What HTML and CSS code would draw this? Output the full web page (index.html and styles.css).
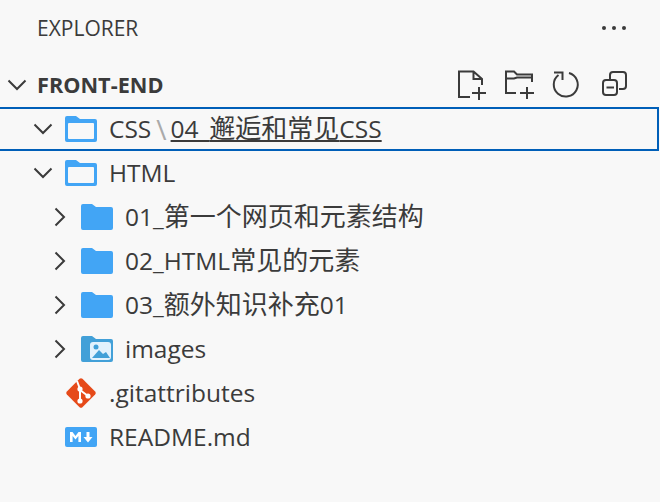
FILE: index.html
```html
<!DOCTYPE html>
<html lang="en">
<head>
  <meta charset="UTF-8" />
  <title>Explorer</title>
  <link rel="stylesheet" href="styles.css">
</head>
<body>

<svg class="sprites" width="0" height="0">
  <symbol id="chev-down" viewBox="0 0 20 12"><path d="M1.5 1.5 L10 10 L18.5 1.5" fill="none" stroke="#3b3b3b" stroke-width="2"/></symbol>
  <symbol id="chev-right" viewBox="0 0 12 20"><path d="M1.5 1.5 L10 10 L1.5 18.5" fill="none" stroke="#3b3b3b" stroke-width="2"/></symbol>
  <symbol id="folder-open" viewBox="0 0 32 26"><path d="M2 0h9l4 3h15a2 2 0 0 1 2 2v19a2 2 0 0 1-2 2H2a2 2 0 0 1-2-2V2a2 2 0 0 1 2-2z" fill="#42a5f5"/><rect x="3" y="7" width="26" height="16" rx="1" fill="#f8f8f8"/></symbol>
  <symbol id="folder" viewBox="0 0 32 26"><path d="M2 0h9l4 3h15a2 2 0 0 1 2 2v19a2 2 0 0 1-2 2H2a2 2 0 0 1-2-2V2a2 2 0 0 1 2-2z" fill="#42a5f5"/></symbol>
</svg>

<aside class="sidebar">
  <header class="title-bar">
    <span class="title">EXPLORER</span>
    <span class="more"><i></i><i></i><i></i></span>
  </header>

  <div class="row section">
    <svg class="chev-d"><use href="#chev-down"/></svg>
    <span class="section-name">FRONT-END</span>
    <div class="actions">
      <svg viewBox="0 0 32 34"><path d="M14 29H3V3.500H17.500L26 11V17M17.500 3.500V11H26M23 19V32M16 25H30"/></svg>
      <svg viewBox="0 0 32 34"><path d="M13 25H3V3.500H11L14 6.500H29V14M3 10.500H11L14 9.500H29M24 19V31M17 25H31"/></svg>
      <svg viewBox="0 0 32 34"><path d="M4 4.500H12.500V12M19 5A12 12 0 1 1 8.500 7"/></svg>
      <svg viewBox="0 0 32 34"><rect x="6" y="12" width="14" height="15" rx="3"/><path d="M13 11V7a3 3 0 0 1 3-3h10a3 3 0 0 1 3 3v11a3 3 0 0 1-3 3h-4M9.500 19.500H17"/></svg>
    </div>
  </div>

  <div class="row lvl1 focused">
    <svg class="chev-d"><use href="#chev-down"/></svg>
    <svg class="icon"><use href="#folder-open"/></svg>
    <span class="name">CSS</span><span class="sep">\</span><span class="name link">04_<span class="cjk">邂逅和常见</span>CSS</span>
  </div>
  <div class="row lvl1">
    <svg class="chev-d"><use href="#chev-down"/></svg>
    <svg class="icon"><use href="#folder-open"/></svg>
    <span class="name">HTML</span>
  </div>
  <div class="row lvl2">
    <svg class="chev-r"><use href="#chev-right"/></svg>
    <svg class="icon"><use href="#folder"/></svg>
    <span class="name">01_<span class="cjk">第一个网页和元素结构</span></span>
  </div>
  <div class="row lvl2">
    <svg class="chev-r"><use href="#chev-right"/></svg>
    <svg class="icon"><use href="#folder"/></svg>
    <span class="name">02_HTML<span class="cjk">常见的元素</span></span>
  </div>
  <div class="row lvl2">
    <svg class="chev-r"><use href="#chev-right"/></svg>
    <svg class="icon"><use href="#folder"/></svg>
    <span class="name">03_<span class="cjk">额外知识补充</span>01</span>
  </div>
  <div class="row lvl2">
    <svg class="chev-r"><use href="#chev-right"/></svg>
    <svg class="icon" viewBox="0 0 32 26">
      <path d="M2 0h9l4 3h15a2 2 0 0 1 2 2v19a2 2 0 0 1-2 2H2a2 2 0 0 1-2-2V2a2 2 0 0 1 2-2z" fill="#42a0d8"/>
      <rect x="9" y="6" width="21" height="18" rx="3" fill="#e3f2fd"/>
      <circle cx="15" cy="11" r="2.500" fill="#42a0d8"/>
      <path d="M11 22l7-8 4 4 3-2 4 6z" fill="#42a0d8"/>
    </svg>
    <span class="name">images</span>
  </div>
  <div class="row file">
    <svg class="icon" viewBox="0 0 32 32">
      <rect x="5" y="5" width="22" height="22" rx="2" transform="rotate(45 16 16)" fill="#e64a19"/>
      <path d="M12 4l3 8M15 12v12M15 13l8 6" stroke="#fff" stroke-width="2" fill="none"/>
      <circle cx="15" cy="24" r="2.600" fill="#fff"/><circle cx="15" cy="12" r="2.600" fill="#fff"/><circle cx="23" cy="19" r="2.600" fill="#fff"/>
    </svg>
    <span class="name">.gitattributes</span>
  </div>
  <div class="row file">
    <svg class="icon" viewBox="0 0 32 20">
      <rect width="32" height="20" rx="2" fill="#42a5f5"/>
      <path d="M5 15V5h2.500l3 4 3-4H16v10h-2.600V9l-2.900 3.600L7.600 9v6z" fill="#fff"/>
      <path d="M21.500 5h3v5h3l-4.500 5.500L18.500 10h3z" fill="#fff"/>
    </svg>
    <span class="name">README.md</span>
  </div>
</aside>

</body>
</html>
```

FILE: styles.css
```css
body {
  margin: 0;
  background: #f8f8f8;
  color: #3b3b3b;
  font-family: "Open Sans", "Noto Sans CJK SC", sans-serif;
  font-size: 24.5px;
}
.sprites { position: absolute; }

.sidebar { width: 660px; height: 502px; overflow: hidden; }

.title-bar {
  height: 63px;
  padding: 0 34px 7px 37px;
  box-sizing: border-box;
  display: flex;
  align-items: center;
  justify-content: space-between;
}
.title { font-size: 21px; }
.more { display: flex; gap: 6px; }
.more i { width: 4px; height: 4px; border-radius: 50%; background: #3b3b3b; }

.row {
  height: 44px;
  box-sizing: border-box;
  display: flex;
  align-items: center;
  white-space: nowrap;
}
.section { padding-left: 7px; }
.section-name { font-size: 21.700px; font-weight: 700; margin-left: 10px; margin-bottom: 1px; }
.lvl1 { padding-left: 33px; }
.lvl2 { padding-left: 54px; }
.file { padding-left: 65px; }

.name { line-height: 34px; margin-bottom: 1px; }
.cjk { font-size: 26px; line-height: 1; }

.chev-d { width: 20px; height: 12px; flex: none; }
.chev-r { width: 12px; height: 20px; flex: none; }
.icon { width: 32px; height: 32px; flex: none; margin-left: 12px; margin-right: 12px; }
.lvl2 .icon { margin-left: 15px; }
.file .icon { margin-left: 0; }

.focused { border: 2px solid #005fb8; margin-right: 1px; padding-left: 33px; margin-left: -2px; }
.sep { color: #aaa; font-size: 28px; line-height: 34px; margin: 0 4px 1px 5px; }
.link { text-decoration: underline; }

.actions {
  margin-left: auto;
  margin-right: 31px;
  display: flex;
  align-items: center;
  gap: 15px;
}
.actions svg {
  width: 32px;
  height: 34px;
  fill: none;
  stroke: #3b3b3b;
  stroke-width: 2;
}
```
